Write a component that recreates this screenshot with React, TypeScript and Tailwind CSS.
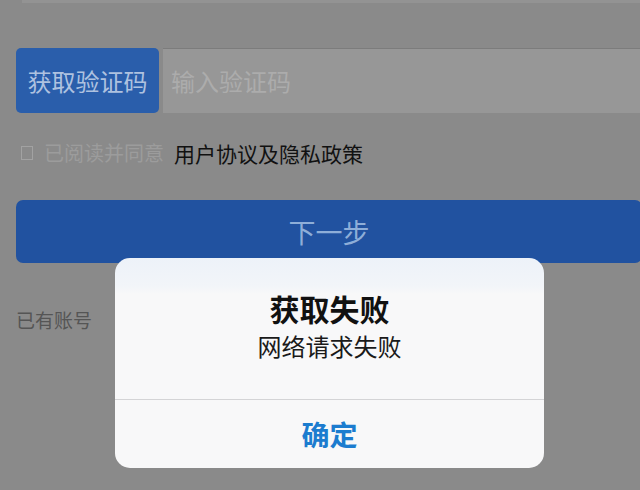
import React from "react";

export default function App() {
  return (
    <div className="relative w-[640px] h-[490px] overflow-hidden bg-[#8a8a8a] font-['Noto_Sans_CJK_SC',sans-serif]">
      <div className="ml-[22px] h-[3px] bg-[#939393]" />
      <div className="mt-[45px] flex h-[65px] pl-[16px]">
        <div className="w-[143px] rounded-[5px] bg-[#2a5eab] flex items-center justify-center text-[24px] leading-none text-[#aec2e0]">
          获取验证码
        </div>
        <div className="ml-[4px] flex-1 bg-[#979797] border-t border-[#7c7c7c] flex items-center pl-[8px] text-[24px] leading-none text-[#acacac]">
          输入验证码
        </div>
      </div>
      <div className="mt-[27px] flex h-[26px] items-center pl-[21px]">
        <div className="w-[12px] h-[14px] border border-[#a2a2a2]" />
        <span className="ml-[11px] text-[20px] leading-none text-[#9c9c9c]">已阅读并同意</span>
        <span className="ml-[10px] text-[21px] leading-none text-[#111111]">用户协议及隐私政策</span>
      </div>
      <div className="mt-[34px] ml-[16px] w-[626px] h-[63px] rounded-[7px] bg-[#2152a0] flex items-center justify-center text-[27px] leading-none text-[#8eaed8]">
        下一步
      </div>
      <div className="mt-[47px] pl-[16px] text-[19px] leading-none text-[#555555]">已有账号</div>

      <div className="absolute left-[115px] top-[258px] w-[429px] h-[210px] rounded-[15px] overflow-hidden bg-[linear-gradient(to_bottom,#edf2f9_0px,#f2f5f9_28px,#f8f8f9_36px)] flex flex-col">
        <div className="h-[141px] flex flex-col items-center pt-[35px]">
          <div className="text-[30px] leading-none font-bold text-[#111111]">获取失败</div>
          <div className="mt-[11px] text-[24px] leading-none text-[#1a1a1a]">网络请求失败</div>
        </div>
        <div className="h-px bg-[#d4d4d6]" />
        <div className="flex-1 flex items-center justify-center text-[28px] leading-none font-bold text-[#1c7ccf]">
          确定
        </div>
      </div>
    </div>
  );
}
